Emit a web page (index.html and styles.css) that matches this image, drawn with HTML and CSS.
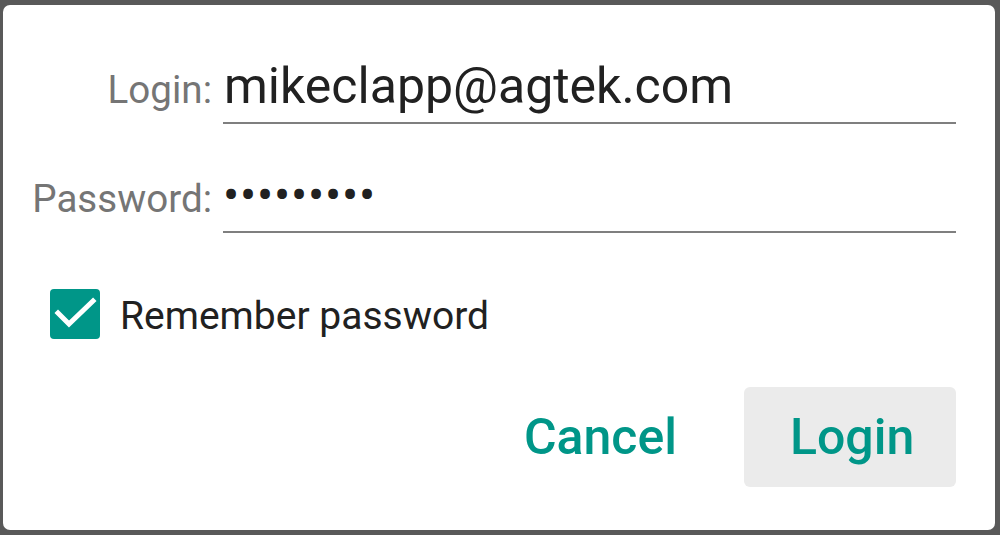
FILE: index.html
```html
<!DOCTYPE html>
<html lang="en">
<head>
  <meta charset="UTF-8">
  <meta name="viewport" content="width=device-width, initial-scale=1.0">
  <title>Login</title>
  <link rel="stylesheet" href="styles.css">
</head>
<body>
  <div class="dialog">
    <div class="form-row">
      <label class="label">Login:</label>
      <div class="field">mikeclapp@agtek.com</div>
    </div>
    <div class="form-row">
      <label class="label">Password:</label>
      <div class="field password">•••••••••</div>
    </div>
    <div class="remember">
      <span class="checkbox">
        <svg width="50" height="50" viewBox="0 0 50 50">
          <path d="M8 24 L19 35 L43 12" fill="none" stroke="#fff" stroke-width="5" stroke-linecap="square"/>
        </svg>
      </span>
      <span class="remember-text">Remember password</span>
    </div>
    <div class="actions">
      <button class="btn">Cancel</button>
      <button class="btn btn-primary">Login</button>
    </div>
  </div>
</body>
</html>
```

FILE: styles.css
```css
body {
  margin: 0;
  background: #595959;
  font-family: Roboto, "Liberation Sans", sans-serif;
}
.dialog {
  width: 992px;
  height: 525px;
  margin: 5px 0 0 3px;
  box-sizing: border-box;
  background: #fff;
  border-radius: 7px;
  padding: 53px 39px 0 0;
}
.form-row {
  display: grid;
  grid-template-columns: 209px 1fr;
  column-gap: 11px;
  align-items: baseline;
  margin-bottom: 43px;
}
.label {
  text-align: right;
  font-size: 38.6px;
  color: #757575;
}
.field {
  font-size: 50px;
  line-height: 57px;
  color: #212121;
  padding: 0 0 7px 1px;
  border-bottom: 2px solid #7f7f7f;
}
.password {
  font-size: 48px;
  letter-spacing: 0.8px;
  padding-left: 0;
}
.remember {
  display: flex;
  align-items: center;
  gap: 20px;
  margin: 56px 0 0 47px;
  height: 50px;
}
.checkbox {
  width: 50px;
  height: 50px;
  border-radius: 4px;
  background: #009688;
  display: flex;
}
.remember-text {
  font-size: 39px;
  color: #212121;
  padding-top: 3px;
}
.actions {
  display: flex;
  justify-content: flex-end;
  gap: 21px;
  margin-top: 48px;
}
.btn {
  height: 100px;
  padding: 0 46px;
  border: none;
  border-radius: 6px;
  background: none;
  color: #009688;
  font-family: Roboto, "Liberation Sans", sans-serif;
  font-size: 50px;
  font-weight: 500;
  cursor: pointer;
}
.btn-primary {
  width: 212px;
  background: #ebebeb;
}
```
